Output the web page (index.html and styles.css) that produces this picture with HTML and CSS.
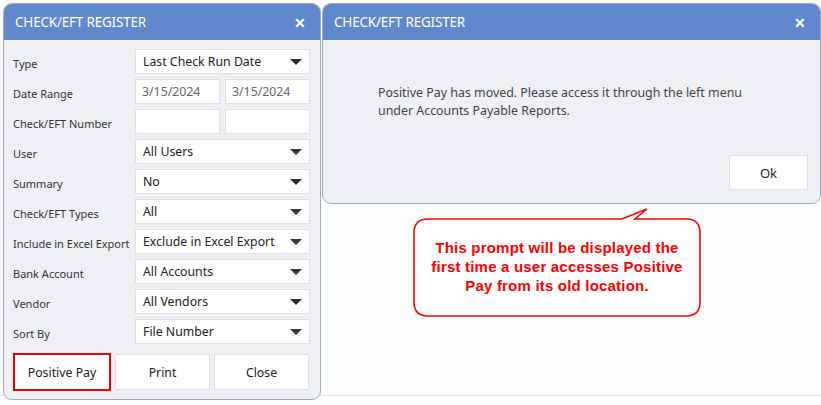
FILE: index.html
```html
<!DOCTYPE html>
<html lang="en">
<head>
<meta charset="UTF-8">
<meta name="viewport" content="width=device-width, initial-scale=1.0">
<title>Check/EFT Register</title>
<link rel="stylesheet" href="styles.css">
</head>
<body>
<div class="desk">

  <div class="dialog register">
    <div class="dialog-head">
      <span class="dialog-title">CHECK/EFT REGISTER</span>
      <span class="dialog-close">&#x2715;</span>
    </div>
    <div class="register-body">
      <div class="form-grid">
        <label>Type</label>
        <div class="select">Last Check Run Date</div>

        <label>Date Range</label>
        <div class="pair">
          <div class="input muted">3/15/2024</div>
          <div class="input muted">3/15/2024</div>
        </div>

        <label>Check/EFT Number</label>
        <div class="pair">
          <div class="input"></div>
          <div class="input"></div>
        </div>

        <label>User</label>
        <div class="select">All Users</div>

        <label>Summary</label>
        <div class="select">No</div>

        <label>Check/EFT Types</label>
        <div class="select">All</div>

        <label>Include in Excel Export</label>
        <div class="select">Exclude in Excel Export</div>

        <label>Bank Account</label>
        <div class="select">All Accounts</div>

        <label>Vendor</label>
        <div class="select">All Vendors</div>

        <label>Sort By</label>
        <div class="select">File Number</div>
      </div>

      <div class="button-row">
        <button type="button" class="btn btn-marked">Positive Pay</button>
        <button type="button" class="btn">Print</button>
        <button type="button" class="btn">Close</button>
      </div>
    </div>
  </div>

  <div class="dialog notice">
    <div class="dialog-head">
      <span class="dialog-title">CHECK/EFT REGISTER</span>
      <span class="dialog-close">&#x2715;</span>
    </div>
    <div class="notice-body">
      <p class="notice-text">Positive Pay has moved. Please access it through the left menu<br>under Accounts Payable Reports.</p>
      <div class="notice-actions">
        <button type="button" class="btn btn-ok">Ok</button>
      </div>
    </div>
  </div>

  <!-- annotation bubble -->
  <div class="callout">
    <svg class="callout-shape" width="292" height="112" viewBox="0 0 292 112">
      <path d="M16 12 H210 L235 2 L223 12 H274 Q288 12 288 26 V95 Q288 109 274 109 H16 Q2 109 2 95 V26 Q2 12 16 12 Z"
            fill="#fff" stroke="#f00" stroke-width="1.6"/>
    </svg>
    <p class="callout-text">This prompt will be displayed the<br>first time a user accesses Positive<br>Pay from its old location.</p>
  </div>

</div>
</body>
</html>
```

FILE: styles.css
```css
body {
  margin: 0;
  padding: 0;
  font-family: 'Noto Sans', 'Open Sans', sans-serif;
  background-color: #fbfcfc;
  background-image: linear-gradient(#dfe2e5, #dfe2e5);
  background-size: 100% 1px;
  background-position: 0 395px;
  background-repeat: no-repeat;
  overflow: hidden;
}

.desk {
  position: relative;
  display: flex;
  align-items: flex-start;
  gap: 1px;
  padding: 3px 0 0 3px;
  width: 821px;
  height: 405px;
  box-sizing: border-box;
}

.dialog {
  flex-shrink: 0;
  background-color: #eff0f4;
  border: 1px solid #a2acb9;
  border-radius: 9px;
  overflow: hidden;
  box-sizing: border-box;
}

.register {
  width: 318px;
  height: 397px;
}

.notice {
  width: 499px;
  height: 201px;
}

.dialog-head {
  display: flex;
  align-items: center;
  justify-content: space-between;
  height: 36px;
  padding: 0 14px 0 11px;
  background-color: #5f88cf;
  color: #fff;
}

.dialog-title {
  font-size: 13.5px;
  letter-spacing: -0.2px;
}

.dialog-close {
  font-size: 14px;
  font-weight: bold;
}

/* left form */
.register-body {
  padding: 9px 10px 0 9px;
}

.form-grid {
  display: grid;
  grid-template-columns: 122px 175px;
  grid-auto-rows: 25px;
  row-gap: 5px;
}

.form-grid label {
  display: flex;
  align-items: center;
  padding-top: 4px;
  font-size: 11px;
  color: #333;
  white-space: nowrap;
}

.select,
.input {
  display: flex;
  align-items: center;
  background-color: #fff;
  border: 1px solid #dde0e5;
  box-sizing: border-box;
  height: 25px;
  padding: 0 7px;
  font-size: 12.3px;
  color: #222;
}

.select {
  position: relative;
}

.select::after {
  content: "";
  position: absolute;
  right: 7px;
  top: 9px;
  border-left: 6px solid transparent;
  border-right: 6px solid transparent;
  border-top: 6px solid #333;
}

.pair {
  display: grid;
  grid-template-columns: 85px 85px;
  column-gap: 5px;
}

.muted {
  color: #666;
  padding-left: 6px;
}

.button-row {
  display: grid;
  grid-template-columns: 98px 95px 95px;
  column-gap: 4px;
  align-items: center;
  margin-top: 9px;
}

.btn {
  height: 36px;
  background-color: #fff;
  border: 1px solid #dde0e5;
  font-family: 'Noto Sans', 'Open Sans', sans-serif;
  font-size: 12.3px;
  color: #222;
  cursor: pointer;
}

.btn-marked {
  height: 38px;
  border: 2px solid #e00;
}

/* right notice */
.notice-body {
  padding: 44px 12px 0 55px;
}

.notice-text {
  margin: 0;
  font-size: 12.4px;
  line-height: 18px;
  color: #444;
}

.notice-actions {
  display: flex;
  justify-content: flex-end;
  margin-top: 35px;
}

.btn-ok {
  width: 79px;
  height: 35px;
  font-size: 13px;
}

/* annotation */
.callout {
  position: absolute;
  left: 412px;
  top: 207px;
  width: 292px;
  height: 112px;
}

.callout-shape {
  position: absolute;
  left: 0;
  top: 0;
}

.callout-text {
  position: relative;
  margin: 0;
  padding-top: 31px;
  width: 290px;
  text-align: center;
  font-family: 'Liberation Sans', Arial, sans-serif;
  font-weight: bold;
  font-size: 15px;
  letter-spacing: 0.2px;
  line-height: 19px;
  color: #f00;
}
```
